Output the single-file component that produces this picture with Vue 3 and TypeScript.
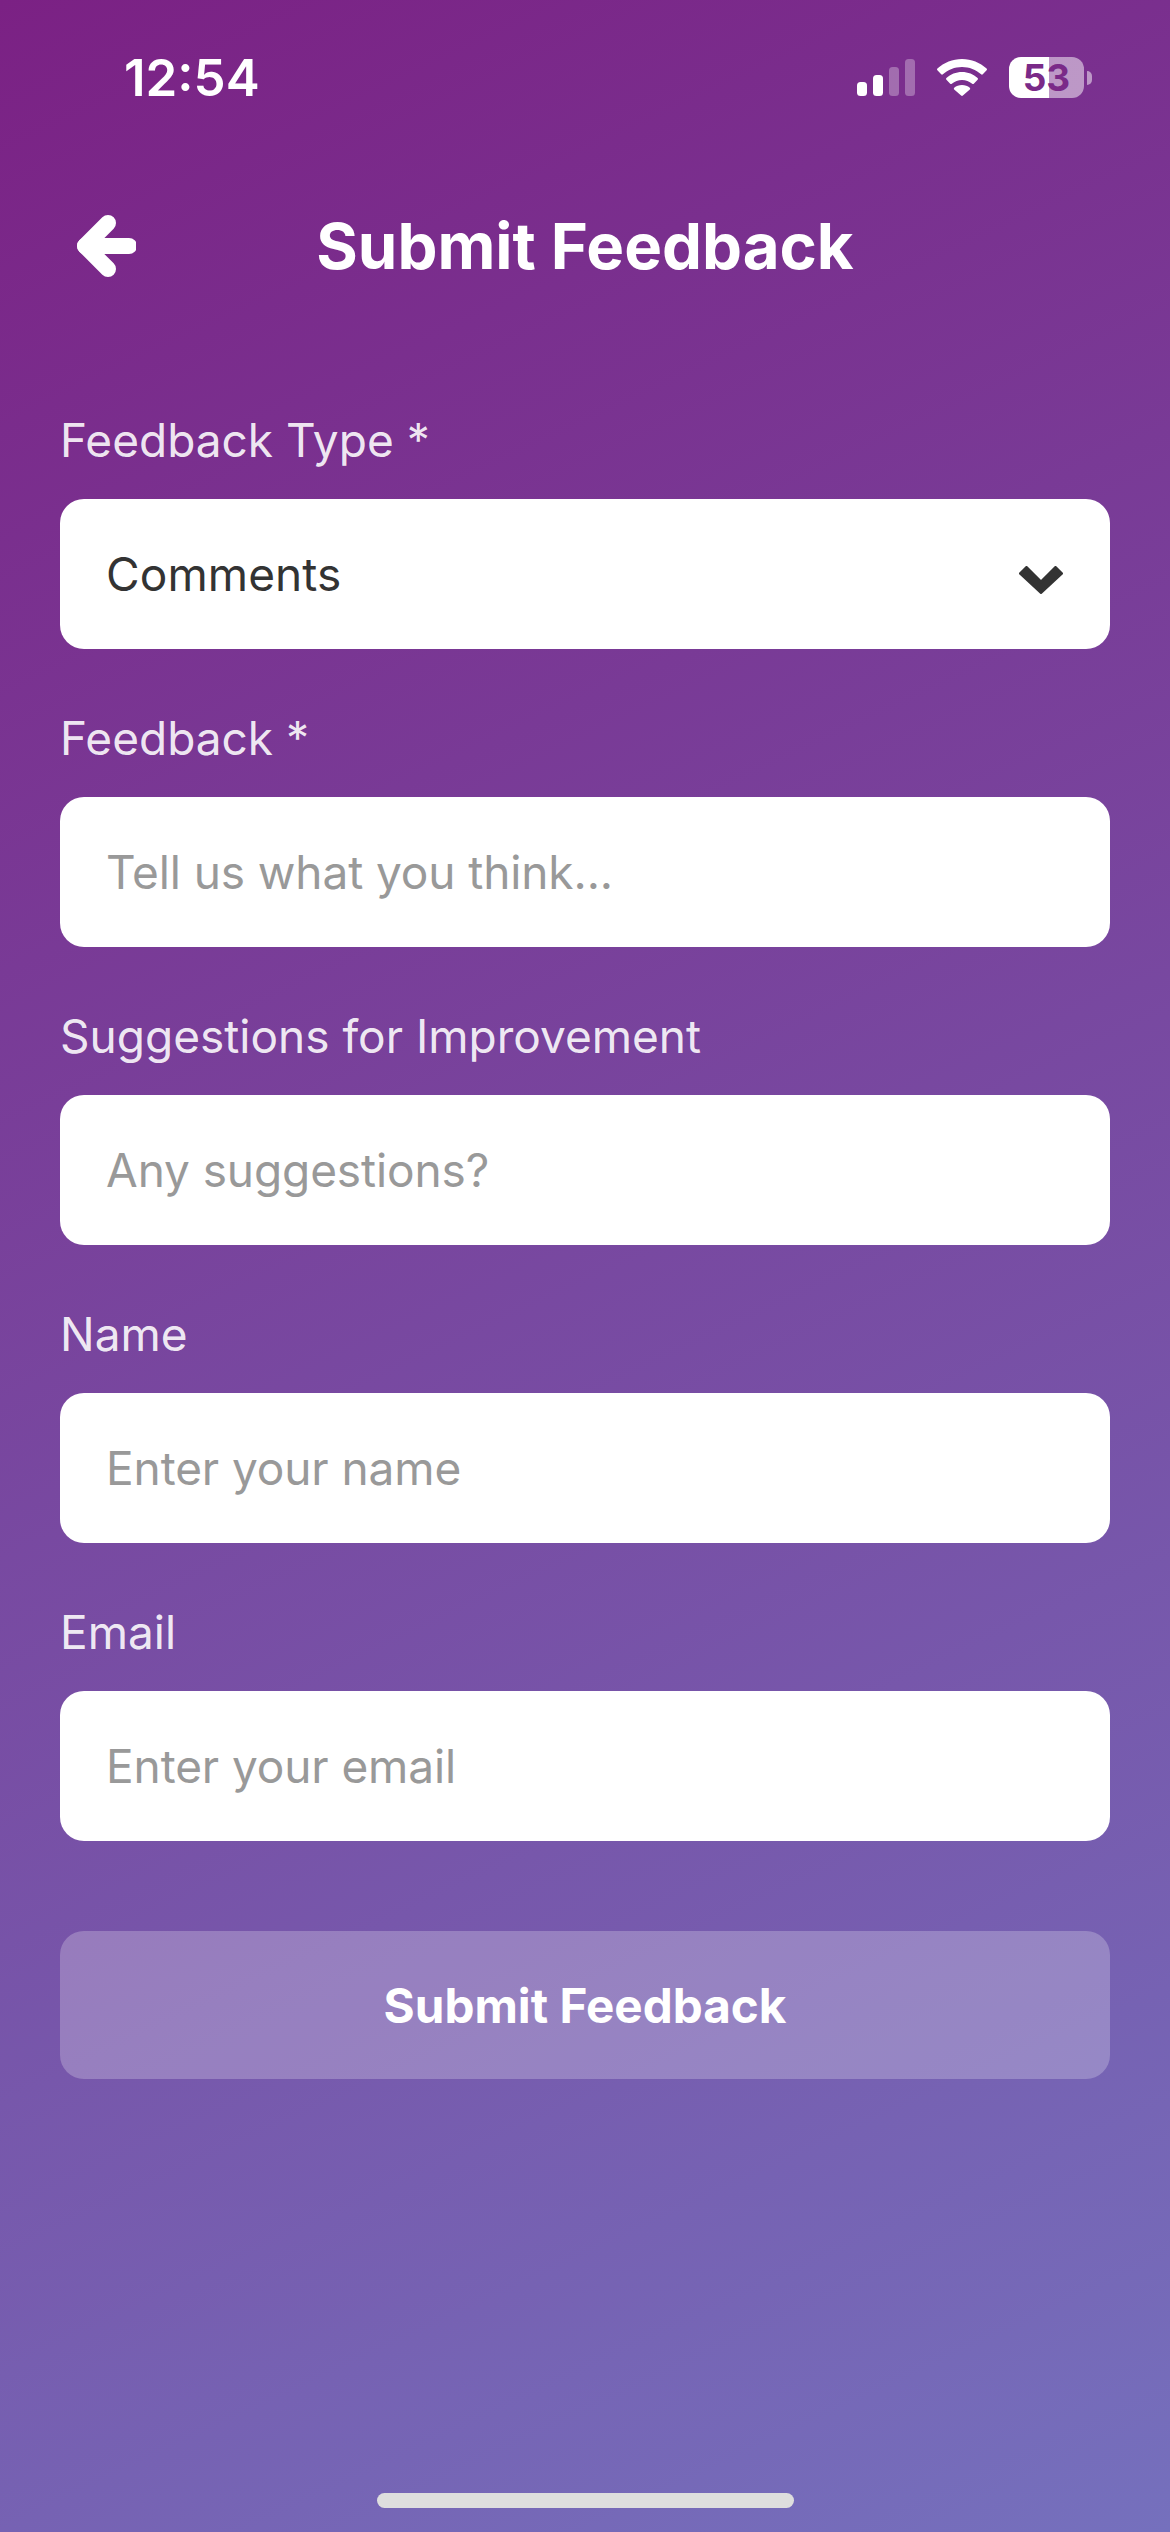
<script setup lang="ts">
interface Field {
  label: string
  text: string
  filled?: boolean
  select?: boolean
}

const fields: Field[] = [
  { label: 'Feedback Type *', text: 'Comments', filled: true, select: true },
  { label: 'Feedback *', text: 'Tell us what you think...' },
  { label: 'Suggestions for Improvement', text: 'Any suggestions?' },
  { label: 'Name', text: 'Enter your name' },
  { label: 'Email', text: 'Enter your email' }
]
</script>

<template>
  <div class="screen">
    <div class="status">
      <span class="time">12:54</span>
      <div class="status-icons">
        <svg class="signal" width="58" height="37" viewBox="0 0 58 37" fill="#fff">
          <rect x="0" y="23" width="10" height="14" rx="3.5" />
          <rect x="16" y="16" width="10" height="21" rx="3.5" />
          <rect x="32" y="8" width="10" height="29" rx="3.5" opacity="0.3" />
          <rect x="48" y="0" width="10" height="37" rx="3.5" opacity="0.3" />
        </svg>
        <svg class="wifi" width="50" height="37" viewBox="0 0 50 37" fill="#fff">
          <path d="M25 0C15.5 0 7 3.6.4 9.6c-.5.5-.5 1.200 0 1.700l3.800 4c.5.5 1.200.5 1.700 0C11 10.800 17.700 8 25 8s14 2.800 19.100 7.300c.5.5 1.200.5 1.700 0l3.800-4c.5-.5.5-1.200 0-1.700C43 3.600 34.500 0 25 0Z" />
          <path d="M25 13c-6 0-11.500 2.300-15.600 6-.5.5-.5 1.200 0 1.700l3.800 4c.5.5 1.100.5 1.600.1C17.700 22.500 21.200 21 25 21s7.300 1.500 10.200 3.800c.5.400 1.100.4 1.600-.1l3.800-4c.5-.5.5-1.200 0-1.700-4.100-3.700-9.600-6-15.600-6Z" />
          <path d="M25 26c-3 0-5.700 1-7.800 2.800-.5.5-.5 1.200 0 1.700l6.900 6.100c.5.500 1.300.500 1.800 0l6.900-6.100c.5-.5.5-1.200 0-1.700C30.700 27 28 26 25 26Z" />
        </svg>
        <div class="battery">
          <div class="battery-body"><span>53</span></div>
          <span class="battery-nub"></span>
        </div>
      </div>
    </div>

    <header class="header">
      <svg class="back" width="60" height="64" viewBox="0 0 60 64" fill="none" stroke="#fff" stroke-width="16" stroke-linecap="round" stroke-linejoin="round">
        <path d="M53 32H9" />
        <path d="M32 9 9 32l23 23" />
      </svg>
      <h1 class="title">Submit Feedback</h1>
    </header>

    <form class="form" @submit.prevent>
      <div v-for="field in fields" :key="field.label" class="group">
        <label class="label">{{ field.label }}</label>
        <div class="field">
          <span :class="field.filled ? 'value' : 'placeholder'">{{ field.text }}</span>
          <svg v-if="field.select" class="chevron" width="44" height="28" viewBox="0 0 44 28" fill="#333" stroke="#333" stroke-width="3" stroke-linejoin="round">
            <path d="M7.500 1.500 22 16 36.500 1.500l6 6L22 26.500 1.500 7.500Z" />
          </svg>
        </div>
      </div>
      <button class="submit" type="submit">Submit Feedback</button>
    </form>

    <div class="home-bar"></div>
  </div>
</template>

<style>
html,
body {
  margin: 0;
  padding: 0;
}
</style>

<style scoped>
.screen {
  position: relative;
  width: 1170px;
  height: 2532px;
  overflow: hidden;
  background: linear-gradient(155deg, #7b2184 0%, #7570bd 100%);
  font-family: Inter, "Liberation Sans", sans-serif;
  color: #fff;
  box-sizing: border-box;
}

.status {
  height: 156px;
  display: flex;
  justify-content: space-between;
  align-items: flex-start;
  padding: 50px 78px 0 124px;
  box-sizing: border-box;
}

.time {
  font-size: 51px;
  font-weight: 600;
  line-height: 56px;
}

.status-icons {
  display: flex;
  align-items: center;
  gap: 22px;
  margin-top: 7px;
}

.signal,
.wifi {
  display: block;
}

.battery {
  display: flex;
  align-items: center;
  gap: 3px;
}

.battery-body {
  width: 75px;
  height: 41px;
  border-radius: 12px;
  background: linear-gradient(90deg, #fff 0 40px, rgba(255, 255, 255, 0.5) 40px 100%);
  display: flex;
  align-items: center;
  justify-content: center;
  font-size: 37px;
  font-weight: 700;
  line-height: 41px;
  color: #7a2a88;
}

.battery-nub {
  width: 5px;
  height: 14px;
  border-radius: 0 5px 5px 0;
  background: rgba(255, 255, 255, 0.5);
}

.header {
  height: 180px;
  display: flex;
  align-items: center;
  justify-content: center;
  position: relative;
  margin-bottom: 75px;
}

.back {
  position: absolute;
  left: 76px;
  top: 58px;
}

.title {
  margin: 0;
  font-size: 63.5px;
  font-weight: 700;
  line-height: 80px;
}

.form {
  padding: 0 60px;
  display: flex;
  flex-direction: column;
}

.group {
  display: flex;
  flex-direction: column;
  gap: 30px;
  margin-bottom: 60px;
}

.label {
  font-size: 46px;
  line-height: 58px;
  font-weight: 400;
  color: rgba(255, 255, 255, 0.9);
}

.field {
  height: 150px;
  border-radius: 24px;
  background: #fff;
  display: flex;
  align-items: center;
  justify-content: space-between;
  padding: 0 47px 1px 46px;
  box-sizing: border-box;
  font-size: 46px;
}

.value {
  color: #333;
  letter-spacing: 0.1px;
}

.placeholder {
  color: #999;
  letter-spacing: -0.1px;
}

.chevron {
  margin-top: 12px;
}

.submit {
  margin-top: 30px;
  height: 148px;
  border: 0;
  border-radius: 24px;
  background: rgba(255, 255, 255, 0.24);
  color: #fff;
  font-family: inherit;
  font-size: 47.6px;
  font-weight: 700;
  padding: 0;
}

.home-bar {
  position: absolute;
  left: 377px;
  top: 2493px;
  width: 417px;
  height: 15px;
  border-radius: 8px;
  background: #dedede;
}
</style>
